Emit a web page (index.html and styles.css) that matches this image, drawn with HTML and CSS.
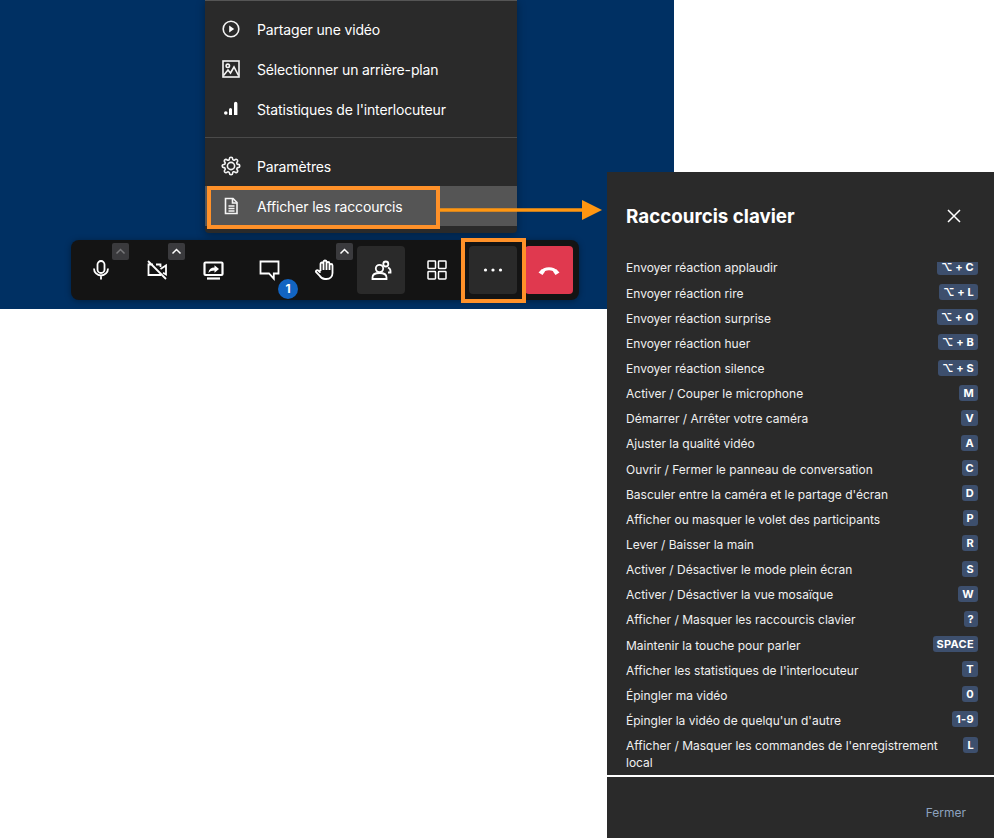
FILE: index.html
```html
<!DOCTYPE html>
<html lang="fr">
<head>
<meta charset="utf-8">
<title>Raccourcis clavier</title>
<link rel="stylesheet" href="styles.css">
</head>
<body>
<div class="page">
  <section class="stage">
    <nav class="menu">
      <ul class="menu-group menu-group-top">
        <li class="menu-item"><svg class="menu-icon" viewBox="0 0 24 24"><circle cx="12" cy="12" r="7.800"/><path class="solid" d="M10.200 8.500 15.200 12l-5 3.500z"/></svg><span>Partager une vidéo</span></li>
        <li class="menu-item"><svg class="menu-icon" viewBox="0 0 24 24"><rect x="4" y="4" width="16" height="16"/><circle cx="8.800" cy="8.800" r="1.700"/><path d="M4.500 18.500l4.500-5.500 2.500 3 3.500-6 4.500 8.500"/></svg><span>Sélectionner un arrière-plan</span></li>
        <li class="menu-item"><svg class="menu-icon" viewBox="0 0 24 24"><path class="solid" d="M5 16a1.800 1.800 0 1 1 3.600 0 1.800 1.800 0 0 1-3.600 0zM10 12.500a1.500 1.500 0 0 1 3 0V18h-3zM15 6.500a1.700 1.700 0 0 1 3.400 0V18H15z"/></svg><span>Statistiques de l'interlocuteur</span></li>
      </ul>
      <ul class="menu-group">
        <li class="menu-item"><svg class="menu-icon menu-icon-gear" viewBox="-3 -3 30 30"><circle cx="12" cy="12" r="4.500"/><path d="M19.400 15a1.650 1.650 0 0 0 .33 1.820l.06.06a2 2 0 0 1 0 2.830 2 2 0 0 1-2.830 0l-.06-.06a1.650 1.650 0 0 0-1.820-.33 1.650 1.650 0 0 0-1 1.510V21a2 2 0 0 1-2 2 2 2 0 0 1-2-2v-.09A1.650 1.650 0 0 0 9 19.400a1.650 1.650 0 0 0-1.820.33l-.06.06a2 2 0 0 1-2.830 0 2 2 0 0 1 0-2.830l.06-.06a1.650 1.650 0 0 0 .33-1.820 1.650 1.650 0 0 0-1.510-1H3a2 2 0 0 1-2-2 2 2 0 0 1 2-2h.09A1.650 1.650 0 0 0 4.600 9a1.650 1.650 0 0 0-.33-1.820l-.06-.06a2 2 0 0 1 0-2.830 2 2 0 0 1 2.830 0l.06.06a1.650 1.650 0 0 0 1.820.33H9a1.650 1.650 0 0 0 1-1.510V3a2 2 0 0 1 2-2 2 2 0 0 1 2 2v.09a1.650 1.650 0 0 0 1 1.510 1.650 1.650 0 0 0 1.820-.33l.06-.06a2 2 0 0 1 2.830 0 2 2 0 0 1 0 2.830l-.06.06a1.650 1.650 0 0 0-.33 1.820V9a1.650 1.650 0 0 0 1.510 1H21a2 2 0 0 1 2 2 2 2 0 0 1-2 2h-.09a1.650 1.650 0 0 0-1.510 1z"/></svg><span>Paramètres</span></li>
        <li class="menu-item menu-item-active"><svg class="menu-icon" viewBox="0 0 24 24"><path d="M6.500 4.500h7.500l4 4v11h-11.500z"/><path d="M13.500 4.500v4.500h4.500"/><path d="M9.500 12h6M9.500 14.500h6M9.500 17h6"/></svg><span>Afficher les raccourcis</span></li>
      </ul>
    </nav>

    <div class="toolbar">
      <div class="tool">
        <svg class="tool-icon" viewBox="0 0 24 24"><rect x="8.500" y="3" width="7" height="12" rx="3.500"/><path d="M5 10.500a7 7 0 0 0 14 0M12 17.500v4"/></svg>
        <span class="caret caret-dim"><svg viewBox="0 0 17 17"><path d="M4.500 10.500l4-4 4 4"/></svg></span>
      </div>
      <div class="tool">
        <svg class="tool-icon" viewBox="0 0 24 24"><path d="M8 6.500H3.500v10.500h12.500M15.500 9V6.500H11M15.500 11l5.500-3.500v9l-3-1.800M3 3l18 18"/></svg>
        <span class="caret"><svg viewBox="0 0 17 17"><path d="M4.500 10.500l4-4 4 4"/></svg></span>
      </div>
      <div class="tool">
        <svg class="tool-icon tool-icon-bold" viewBox="0 0 24 24"><rect x="3.500" y="4.500" width="18" height="12.500" rx="1"/><path d="M6 20.500h13"/><path class="solid" d="M7.500 14.500c.4-3.200 2.600-5 6-5V7.200l4.500 3.800-4.500 3.800v-2.400c-2.600 0-4.400.6-6 2.600z"/></svg>
      </div>
      <div class="tool">
        <svg class="tool-icon" viewBox="0 0 24 24"><path d="M3.500 3.500h18v12h-4.700v5.200L12 15.500H3.500z"/></svg>
        <span class="badge">1</span>
      </div>
      <div class="tool">
        <svg class="tool-icon" viewBox="0 0 24 24"><path d="M7.500 13V6a1.500 1.500 0 0 1 3 0V4a1.500 1.500 0 0 1 3 0v1.500a1.500 1.500 0 0 1 3 0v2a1.500 1.500 0 0 1 3 0V15c0 3.700-2.500 6-6 6h-1.500c-2.500 0-4-1-5.500-3.500L3 14c-.7-1.300 1-2.500 2.200-1.500l2.300 2.200M10.500 6v6M13.500 5v7M16.500 6v6"/></svg>
        <span class="caret"><svg viewBox="0 0 17 17"><path d="M4.500 10.500l4-4 4 4"/></svg></span>
      </div>
      <div class="tool tool-on">
        <svg class="tool-icon" viewBox="0 0 24 24"><circle cx="10.500" cy="10.500" r="3.700"/><path d="M3.500 21v-1.500c0-3 3-4.500 7-4.500s7 1.500 7 4.500V21z"/><circle cx="16.800" cy="6" r="2.500"/><path d="M19 9.500c1.500.7 2.500 1.800 2.500 3.500v1.500H19"/></svg>
      </div>
      <div class="tool">
        <svg class="tool-icon tool-icon-thin" viewBox="0 0 24 24"><rect x="3" y="3" width="7.500" height="7.500" rx=".7"/><rect x="13.500" y="3" width="7.500" height="7.500" rx=".7"/><rect x="3" y="13.500" width="7.500" height="7.500" rx=".7"/><rect x="13.500" y="13.500" width="7.500" height="7.500" rx=".7"/></svg>
      </div>
      <div class="tool tool-on">
        <svg class="tool-icon" viewBox="0 0 24 24"><circle class="solid" cx="4.500" cy="12" r="1.600"/><circle class="solid" cx="12" cy="12" r="1.600"/><circle class="solid" cx="19.500" cy="12" r="1.600"/></svg>
      </div>
      <div class="tool tool-leave">
        <svg class="tool-icon" viewBox="0 0 24 24"><path class="thick" d="M4 14.500C8 9.500 16 9.500 20 14.500"/><path class="solid" d="M1.500 14.500l3.500-3.500 3 2.500-2.500 3.500zM22.500 14.500 19 11l-3 2.500 2.500 3.500z"/></svg>
      </div>
    </div>

    <div class="mark mark-item"></div>
    <div class="mark mark-more"></div>
    <svg class="arrow" viewBox="0 0 164 22"><path class="arrow-line" d="M0 11h144"/><path class="arrow-head" d="M142 1l20 10-20 10z"/></svg>
  </section>

  <aside class="dialog">
    <header class="dialog-head">
      <h1>Raccourcis clavier</h1>
      <svg class="close" viewBox="0 0 14 14"><path d="M1 1l12 12M13 1 1 13"/></svg>
    </header>
    <div class="list-clip">
      <ul class="list">
        <li class="row"><span>Envoyer réaction applaudir</span><kbd>⌥ + C</kbd></li>
        <li class="row"><span>Envoyer réaction rire</span><kbd>⌥ + L</kbd></li>
        <li class="row"><span>Envoyer réaction surprise</span><kbd>⌥ + O</kbd></li>
        <li class="row"><span>Envoyer réaction huer</span><kbd>⌥ + B</kbd></li>
        <li class="row"><span>Envoyer réaction silence</span><kbd>⌥ + S</kbd></li>
        <li class="row"><span>Activer / Couper le microphone</span><kbd>M</kbd></li>
        <li class="row"><span>Démarrer / Arrêter votre caméra</span><kbd>V</kbd></li>
        <li class="row"><span>Ajuster la qualité vidéo</span><kbd>A</kbd></li>
        <li class="row"><span>Ouvrir / Fermer le panneau de conversation</span><kbd>C</kbd></li>
        <li class="row"><span>Basculer entre la caméra et le partage d'écran</span><kbd>D</kbd></li>
        <li class="row"><span>Afficher ou masquer le volet des participants</span><kbd>P</kbd></li>
        <li class="row"><span>Lever / Baisser la main</span><kbd>R</kbd></li>
        <li class="row"><span>Activer / Désactiver le mode plein écran</span><kbd>S</kbd></li>
        <li class="row"><span>Activer / Désactiver la vue mosaïque</span><kbd>W</kbd></li>
        <li class="row"><span>Afficher / Masquer les raccourcis clavier</span><kbd>?</kbd></li>
        <li class="row"><span>Maintenir la touche pour parler</span><kbd>SPACE</kbd></li>
        <li class="row"><span>Afficher les statistiques de l'interlocuteur</span><kbd>T</kbd></li>
        <li class="row"><span>Épingler ma vidéo</span><kbd>0</kbd></li>
        <li class="row"><span>Épingler la vidéo de quelqu'un d'autre</span><kbd>1-9</kbd></li>
        <li class="row"><span>Afficher / Masquer les commandes de l'enregistrement local</span><kbd>L</kbd></li>
      </ul>
    </div>
    <footer class="dialog-foot"><span>Fermer</span></footer>
  </aside>
</div>
</body>
</html>
```
FILE: styles.css
```css
* { box-sizing: border-box; }
html, body { margin: 0; padding: 0; background: #fff; }
body { font-family: Inter, "DejaVu Sans", sans-serif; overflow: hidden; }
ul { list-style: none; margin: 0; padding: 0; }

.page { position: relative; width: 994px; height: 838px; }

.stage { position: relative; width: 674px; height: 309px; background: #003063; }

/* popup menu */
.menu {
  position: absolute; left: 205px; top: 0; width: 312px; height: 233px;
  background: #2a2a2a; border-top: 1px solid #555;
  border-radius: 0 0 4px 4px;
  box-shadow: 0 2px 8px rgba(0, 0, 0, .35);
  color: #fff; font-size: 14px; letter-spacing: -.15px;
}
.menu-group { padding-top: 8px; }
.menu-group-top { padding-bottom: 8px; border-bottom: 1px solid #4a4a4a; }
.menu-item { display: flex; align-items: center; gap: 14px; height: 40px; padding-left: 14px; }
.menu-item-active { background: #555; }
.menu-icon { width: 24px; height: 24px; flex: none; fill: none; stroke: #f4f4f4; stroke-width: 1.600; }
.menu-icon-gear { stroke-width: 2; }

.solid { fill: #fff; stroke: none; }

/* toolbar */
.toolbar {
  position: absolute; left: 71px; top: 240px;
  display: flex; gap: 8px; padding: 6px;
  background: #141414; border-radius: 8px;
  box-shadow: 0 1px 6px rgba(0, 0, 0, .35);
}
.tool { position: relative; width: 48px; height: 48px; border-radius: 4px; display: flex; align-items: center; justify-content: center; }
.tool-on { background: #2a2a2a; }
.tool-leave { background: #e0394f; }
.tool-icon { width: 24px; height: 24px; fill: none; stroke: #fff; stroke-width: 1.800; }
.tool-icon-bold { stroke-width: 2.200; }
.tool-icon-thin { stroke-width: 1.500; }
.thick { stroke-width: 3; }
.caret { position: absolute; right: -4px; top: -3px; width: 17px; height: 17px; background: #3a3a3d; border-radius: 2px; }
.caret svg { display: block; width: 17px; height: 17px; fill: none; stroke: #fff; stroke-width: 1.500; }
.caret-dim svg { stroke: #77777a; }
.badge {
  position: absolute; left: 33px; top: 33px; width: 20px; height: 20px;
  border-radius: 50%; background: #1264c2; color: #fff;
  font-size: 12px; font-weight: 700; line-height: 20px; text-align: center;
}

/* orange annotations */
.mark { position: absolute; border: 4px solid #ff9129; }
.mark-item { left: 207px; top: 186px; width: 233px; height: 43px; }
.mark-more { left: 461px; top: 238px; width: 65px; height: 65px; }
.arrow { position: absolute; left: 440px; top: 199px; width: 164px; height: 22px; }
.arrow-line { fill: none; stroke: #ff9611; stroke-width: 3.500; }
.arrow-head { fill: #ff9611; }

/* shortcuts dialog */
.dialog {
  position: absolute; left: 607px; top: 172px; width: 387px; height: 666px;
  display: flex; flex-direction: column;
  background: #2a2a2a; color: #f0f0f0;
}
.dialog-head { height: 90px; flex: none; padding: 33px 33px 0 19px; display: flex; justify-content: space-between; align-items: flex-start; }
.dialog-head h1 { margin: 0; font-size: 18.800px; line-height: 24px; font-weight: 700; color: #fff; }
.close { width: 14px; height: 14px; margin-top: 4px; fill: none; stroke: #fff; stroke-width: 1.500; }
.list-clip { flex: 1; overflow: hidden; }
.list { margin-top: -2.570px; padding: 0 16px 0 19px; display: flex; flex-direction: column; gap: 8.143px; }
.row { display: flex; justify-content: space-between; align-items: flex-start; gap: 8px; font-size: 12px; line-height: 17px; }
kbd {
  flex: none; height: 16px; margin-top: -.5px; padding: 0 4px; border-radius: 3px;
  background: #3d4f6d; color: #fff;
  font-family: Inter, "DejaVu Sans", sans-serif; font-size: 11px; font-weight: 700; line-height: 16px;
  letter-spacing: .3px; word-spacing: -.4px;
}
.dialog-foot { height: 63px; flex: none; border-top: 2px solid #fff; padding: 27px 28px 0 0; display: flex; justify-content: flex-end; font-size: 12px; line-height: 18px; color: #8da2bf; }
```
